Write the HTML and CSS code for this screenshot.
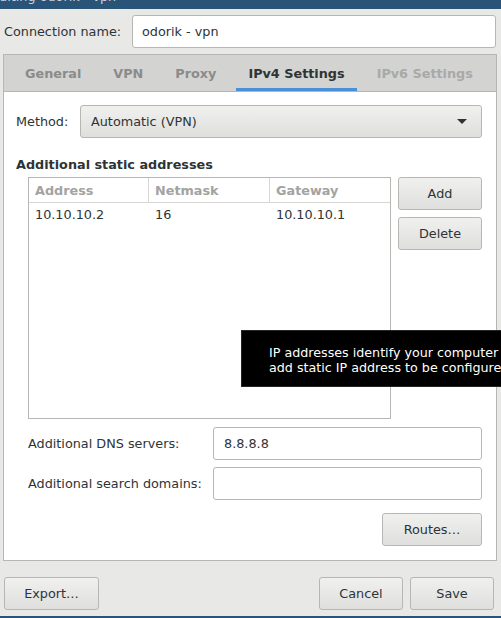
FILE: index.html
```html
<!DOCTYPE html>
<html lang="en">
<head>
    <meta charset="UTF-8">
    <title>Editing odorik - vpn</title>
    <link rel="stylesheet" href="styles.css">
</head>
<body>

    <div class="titlebar">
        <div class="title">Editing odorik - vpn</div>
    </div>

    <div class="dialog">
        <div class="conn-row">
            <label class="conn-label" for="conn-name">Connection name:</label>
            <input class="entry conn-entry" id="conn-name" type="text" value="odorik - vpn">
        </div>

        <div class="notebook">
            <div class="tabs">
                <div class="tab">General</div>
                <div class="tab">VPN</div>
                <div class="tab">Proxy</div>
                <div class="tab active">IPv4 Settings</div>
                <div class="tab disabled">IPv6 Settings</div>
            </div>

            <div class="page">
                <div class="method-row">
                    <span class="method-label">Method:</span>
                    <div class="button combo">
                        <span>Automatic (VPN)</span>
                        <span class="arrow"></span>
                    </div>
                </div>

                <div class="section-title">Additional static addresses</div>

                <div class="addr-row">
                    <div class="tree">
                        <div class="tree-head">
                            <div class="col col-addr">Address</div>
                            <div class="col col-mask">Netmask</div>
                            <div class="col col-gw">Gateway</div>
                        </div>
                        <div class="tree-line">
                            <div class="col col-addr">10.10.10.2</div>
                            <div class="col col-mask">16</div>
                            <div class="col col-gw">10.10.10.1</div>
                        </div>
                    </div>
                    <div class="side-buttons">
                        <div class="button">Add</div>
                        <div class="button">Delete</div>
                    </div>
                </div>

                <div class="form">
                    <div class="form-row">
                        <span class="form-label">Additional DNS servers:</span>
                        <input class="entry form-entry" type="text" value="8.8.8.8">
                    </div>
                    <div class="form-row">
                        <span class="form-label">Additional search domains:</span>
                        <input class="entry form-entry" type="text" value="">
                    </div>
                </div>

                <div class="routes-row">
                    <div class="button routes">Routes…</div>
                </div>
            </div>
        </div>

        <div class="actions">
            <div class="button export">Export…</div>
            <div class="spacer"></div>
            <div class="button">Cancel</div>
            <div class="button">Save</div>
        </div>
    </div>

    <!-- hover tooltip for the addresses list -->
    <div class="tooltip">
        IP addresses identify your computer on the network. Click the "Add" button to<br>
        add static IP address to be configured.
    </div>

    <div class="bottom-edge"></div>

</body>
</html>
```

FILE: styles.css
```css
body {
    margin: 0;
    width: 501px;
    height: 618px;
    overflow: hidden;
    position: relative;
    background-color: #e8e8e7;
    font-family: "DejaVu Sans", sans-serif;
    font-size: 12.8px;
    color: #2e3436;
}
.titlebar {
    height: 9px;
    background-color: #2a5378;
    overflow: hidden;
}
.title {
    margin-top: -11px;
    margin-left: -9px;
    line-height: 16px;
    color: #c9d3dd;
}
.dialog {
    padding: 6px 7px 0 4px;
}
.conn-row {
    display: flex;
    align-items: center;
    height: 33px;
    margin-right: -2px;
}
.conn-label {
    width: 128px;
}
.entry {
    box-sizing: border-box;
    height: 33px;
    border: 1px solid #b6b6b3;
    border-radius: 3px;
    background-color: #fff;
    padding: 0 10px;
    font-family: "DejaVu Sans", sans-serif;
    font-size: 12.8px;
    color: #2e3436;
    outline: none;
}
.conn-entry {
    flex: 1;
    padding-left: 9px;
}
.button {
    box-sizing: border-box;
    height: 33px;
    border: 1px solid #b6b6b3;
    border-radius: 3px;
    background: linear-gradient(#f0f0ef, #dfdfdd);
    display: flex;
    align-items: center;
    justify-content: center;
    color: #2e3436;
}
/* notebook with tab header */
.notebook {
    margin: 6px -3px 0 -1px;
    height: 507px;
    box-sizing: border-box;
    border: 1px solid #b6b6b3;
    background-color: #fff;
}
.tabs {
    display: flex;
    height: 36px;
    padding-left: 9px;
    gap: 8px;
    background-color: #d3d3d2;
    border-bottom: 1px solid #b6b6b3;
}
.tab {
    padding: 0 12px;
    display: flex;
    align-items: center;
    font-weight: bold;
    color: #8b8b8b;
    box-sizing: border-box;
    border-bottom: 3px solid transparent;
    padding-top: 3px;
}
.tab.active {
    color: #2e3436;
    border-bottom-color: #4a90d9;
}
.tab.disabled {
    color: #a9a9a8;
}
.page {
    padding: 13px 14px 0 12px;
}
.method-row {
    display: flex;
    align-items: center;
}
.method-label {
    width: 64px;
}
.combo {
    flex: 1;
    justify-content: space-between;
    padding: 0 14px 0 10px;
}
.arrow {
    width: 0;
    height: 0;
    border-left: 5px solid transparent;
    border-right: 5px solid transparent;
    border-top: 5px solid #2e3436;
}
.section-title {
    font-weight: bold;
    margin-top: 19px;
    line-height: 16px;
}
.addr-row {
    display: flex;
    gap: 7px;
    margin-top: 4px;
    padding-left: 12px;
}
.tree {
    width: 363px;
    height: 242px;
    box-sizing: border-box;
    border: 1px solid #b6b6b3;
    background-color: #fff;
}
.tree-head,
.tree-line {
    display: flex;
}
.tree-head {
    height: 24px;
    border-bottom: 1px solid #d6d6d5;
    font-weight: bold;
    color: #a3a3a2;
}
.tree-line {
    height: 22px;
}
.col {
    box-sizing: border-box;
    padding-left: 6px;
    display: flex;
    align-items: center;
}
.col-addr { width: 119px; }
.col-mask { width: 121px; }
.col-gw { flex: 1; }
.tree-head .col + .col {
    border-left: 1px solid #d6d6d5;
}
.tree-line .col + .col {
    padding-left: 7px;
}
.side-buttons {
    display: flex;
    flex-direction: column;
    gap: 7px;
    width: 84px;
}
.form {
    margin-top: 8px;
    padding-left: 12px;
    display: flex;
    flex-direction: column;
    gap: 7px;
}
.form-row {
    display: flex;
    align-items: center;
}
.form-label {
    width: 185px;
}
.form-entry {
    flex: 1;
}
.routes-row {
    display: flex;
    justify-content: flex-end;
    margin-top: 13px;
}
.routes {
    width: 100px;
}
.actions {
    display: flex;
    gap: 7px;
    margin-top: 16px;
}
.actions .button {
    width: 84px;
}
.actions .export {
    width: 95px;
}
.spacer {
    flex: 1;
}
.tooltip {
    position: absolute;
    left: 241px;
    top: 330px;
    width: 420px;
    height: 57px;
    box-sizing: border-box;
    padding: 14px 0 0 27px;
    background-color: #000;
    border: 1px solid #262626;
    color: #fff;
    font-size: 12.7px;
    line-height: 15px;
    white-space: nowrap;
}
.bottom-edge {
    position: absolute;
    left: 0;
    right: 0;
    bottom: 0;
    height: 2px;
    background-color: #2a5378;
}
```
